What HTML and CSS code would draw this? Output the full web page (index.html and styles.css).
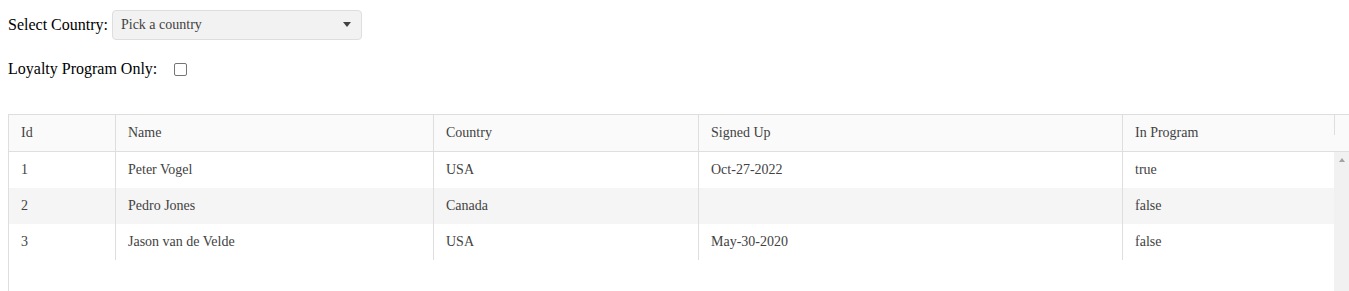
FILE: index.html
```html
<!DOCTYPE html>
<html>
<head>
<meta charset="utf-8">
<link rel="stylesheet" href="styles.css">
</head>
<body>
<div class="filter-row">
  <span class="label">Select Country:</span>
  <div class="dropdown">
    <span class="dropdown-value">Pick a country</span>
    <span class="dropdown-arrow"></span>
  </div>
</div>
<div class="check-row">
  <span class="label">Loyalty Program Only:</span>
  <span class="checkbox"></span>
</div>
<div class="grid">
  <div class="grid-header">
    <div class="cell first">Id</div>
    <div class="cell">Name</div>
    <div class="cell">Country</div>
    <div class="cell">Signed Up</div>
    <div class="cell">In Program</div>
    <div class="cell spacer"></div>
  </div>
  <div class="grid-content">
    <div class="grid-table">
      <div class="grid-row">
        <div class="cell first">1</div>
        <div class="cell">Peter Vogel</div>
        <div class="cell">USA</div>
        <div class="cell">Oct-27-2022</div>
        <div class="cell">true</div>
      </div>
      <div class="grid-row alt">
        <div class="cell first">2</div>
        <div class="cell">Pedro Jones</div>
        <div class="cell">Canada</div>
        <div class="cell"></div>
        <div class="cell">false</div>
      </div>
      <div class="grid-row">
        <div class="cell first">3</div>
        <div class="cell">Jason van de Velde</div>
        <div class="cell">USA</div>
        <div class="cell">May-30-2020</div>
        <div class="cell">false</div>
      </div>
    </div>
    <div class="scrollbar"><span class="scroll-up"></span></div>
  </div>
</div>
</body>
</html>
```
FILE: styles.css
```css
html {
  overflow: hidden;
}
body {
  margin: 8px 0 0 8px;
  font-family: "Liberation Serif", "Times New Roman", serif;
  font-size: 16px;
  color: #000;
  background: #fff;
}
.filter-row {
  display: flex;
  align-items: center;
  padding-top: 2px;
  height: 30px;
}
.label {
  white-space: nowrap;
  line-height: 20px;
}
.dropdown {
  margin-left: 4px;
  width: 250px;
  height: 30px;
  box-sizing: border-box;
  border: 1px solid #dedede;
  border-radius: 4px;
  background: #f2f2f2;
  display: flex;
  align-items: center;
  font-size: 14px;
  color: #424242;
}
.dropdown-value {
  flex: 1;
  padding-left: 8px;
}
.dropdown-arrow {
  width: 28px;
  display: flex;
  justify-content: center;
}
.dropdown-arrow::before {
  content: "";
  display: block;
  border-left: 4px solid transparent;
  border-right: 4px solid transparent;
  border-top: 5px solid #424242;
  margin-top: -1px;
}
.check-row {
  display: flex;
  align-items: center;
  margin-top: 19px;
  height: 20px;
}
.checkbox {
  width: 13px;
  height: 13px;
  box-sizing: border-box;
  border: 1px solid #767676;
  border-radius: 2px;
  margin-left: 17px;
  background: #fff;
}
.grid {
  margin-top: 35px;
  width: 1341px;
  height: 177px;
  box-sizing: border-box;
  border-top: 1px solid #dedede;
  border-left: 1px solid #dedede;
  font-size: 14px;
  color: #424242;
  background: #fff;
  overflow: hidden;
}
.grid-header {
  display: grid;
  grid-template-columns: 106px 318px 265px 424px 212px 15px;
  background: #fafafa;
  border-bottom: 1px solid #dedede;
}
.cell {
  padding: 8px 12px;
  line-height: 20px;
  height: 20px;
  border-left: 1px solid #dedede;
  white-space: nowrap;
  overflow: hidden;
}
.cell.first {
  border-left: none;
}
.cell.spacer {
  padding: 0;
}
.grid-content {
  display: flex;
  height: 140px;
}
.grid-table {
  width: 1325px;
  display: flex;
  flex-direction: column;
}
.grid-row {
  display: grid;
  grid-template-columns: 106px 318px 265px 424px 212px;
}
.grid-row.alt {
  background: #f5f5f5;
}
.scrollbar {
  width: 15px;
  background: #f1f1f1;
  display: flex;
  justify-content: center;
}
.scroll-up {
  display: block;
  width: 0;
  height: 0;
  margin-top: 6px;
  border-left: 3px solid transparent;
  border-right: 3px solid transparent;
  border-bottom: 4px solid #a3a3a3;
}
```
